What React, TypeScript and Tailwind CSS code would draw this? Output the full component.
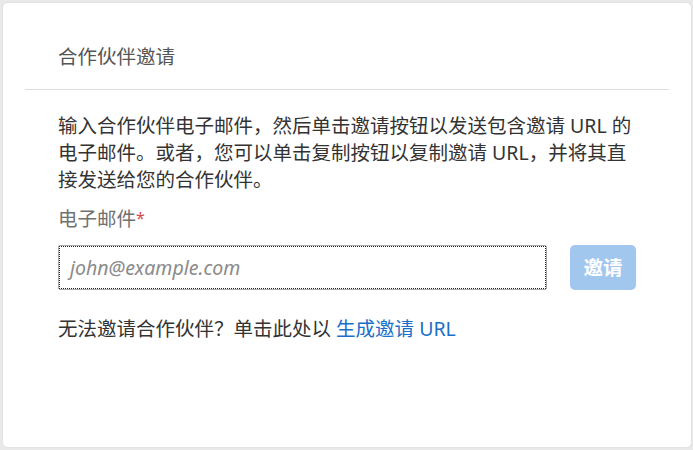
import React from "react";

export default function App() {
  const font = { fontFamily: '"Noto Sans", "Noto Sans CJK SC", sans-serif' };
  return (
    <div className="w-[693px] h-[450px] bg-[#e9e9e9] pt-[3px] pl-[3px] pr-[2px] pb-[3px]" style={font}>
      <div className="h-[444px] bg-white rounded-[4px] shadow-[0_0_1px_rgba(0,0,0,0.25)] px-[22px]">
        <div className="pt-[41px] pb-[19px] px-[33px] text-[19.5px] leading-[26px] text-[#555]">合作伙伴邀请</div>
        <div className="h-px bg-[#dcdcdc]" />
        <div className="px-[33px]">
          <p className="mt-[22px] text-[19.5px] leading-[27px] text-[#333]">
            输入合作伙伴电子邮件，然后单击邀请按钮以发送包含邀请 URL 的电子邮件。或者，您可以单击复制按钮以复制邀请 URL，并将其直接发送给您的合作伙伴。
          </p>
          <div className="mt-[12px] text-[19.5px] leading-[27px] text-[#707070]">
            电子邮件<span className="text-[16px] text-[#d24a50] align-top">*</span>
          </div>
          <div className="mt-[13px] flex items-center gap-[23px]">
            <div className="w-[489px] h-[45px] border border-[#a8a8a8] rounded-[2px]">
              <div className="h-full border border-dotted border-[#222] flex items-center pl-[10px]">
                <span className="italic text-[19.5px] text-[#8a8a8a]">john@example.com</span>
              </div>
            </div>
            <button className="w-[66px] h-[45px] rounded-[5px] bg-[#a2c7ef] text-white font-bold text-[19.5px]">邀请</button>
          </div>
          <div className="mt-[25px] text-[19.5px] leading-[27px] text-[#333]">
            无法邀请合作伙伴？单击此处以 <span className="text-[#1a6fc9]">生成邀请 URL</span>
          </div>
        </div>
      </div>
    </div>
  );
}
